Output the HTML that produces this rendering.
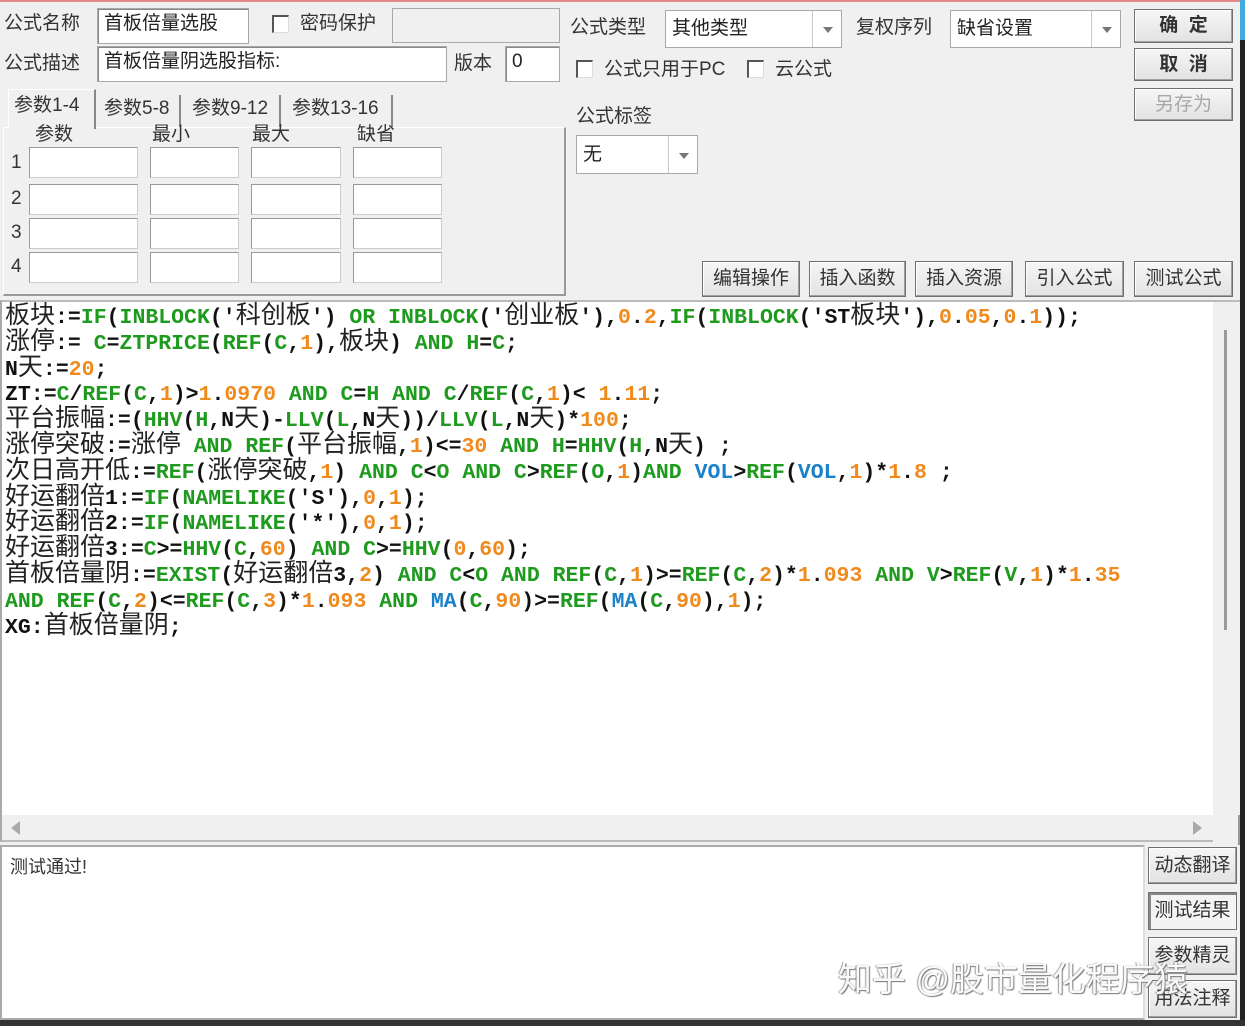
<!DOCTYPE html>
<html><head><meta charset="utf-8"><style>
*{margin:0;padding:0;box-sizing:border-box}
body{width:1245px;height:1026px;background:#f0f0f0;position:relative;overflow:hidden;font-family:"Liberation Sans","Noto Sans CJK SC",sans-serif;font-size:18px;color:#222}
.a{position:absolute}
.lbl{position:absolute;font-size:19px;line-height:24px;color:#333;white-space:nowrap}
.inp{position:absolute;background:#fff;border:1px solid #a8a8a8;box-shadow:inset 1px 1px 0 #888;font-size:19px;line-height:30px;padding-left:6px;white-space:nowrap}
.cb{position:absolute;width:17px;height:18px;background:#fff;border:1px solid #888;border-right-color:#ddd;border-bottom-color:#ddd;border-top:2px solid #555;border-left:2px solid #555}
.btn{position:absolute;background:linear-gradient(#f6f6f6,#e2e2e2);border:1px solid #707070;box-shadow:inset -1px -1px 0 #a0a0a0,inset 1px 1px 0 #fff;font-size:19px;text-align:center;color:#333;white-space:nowrap}
.combo{position:absolute;background:#fff;border:1px solid #a8a8a8;font-size:19px;padding-left:6px;white-space:nowrap}
.combo .dd{position:absolute;right:0;top:0;bottom:0;width:29px;border-left:1px solid #c8c8c8}
.combo .dd:after{content:"";position:absolute;left:10px;top:50%;margin-top:-2px;border-left:5px solid transparent;border-right:5px solid transparent;border-top:6px solid #777}
.cell{position:absolute;background:#fff;border:1px solid #999;border-bottom-color:#ccc;border-right-color:#ccc}
#code{position:absolute;left:0;top:300px;width:1213px;height:515px;background:#fff;border-top:2px solid #bbb;border-left:2px solid #aaa;padding-top:4px;padding-left:3px}
.ln{height:25.8px;line-height:25.8px;white-space:pre;font-family:"Liberation Mono",monospace;font-weight:bold;font-size:21.5px;color:#111;overflow:visible}
.ln i{font-style:normal;font-weight:normal;font-family:"Noto Sans CJK SC",sans-serif;font-size:25px;line-height:0;color:#222;letter-spacing:0px}
.g{color:#1e9a1e}.o{color:#f08a1c}.b{color:#1a82c8}
</style></head><body>
<div class="a" style="left:0;top:0;width:1245px;height:2px;background:#e28a8a"></div>
<div class="a" style="left:1240px;top:0;width:5px;height:1026px;background:#222"></div>
<div class="a" style="left:1240px;top:0;width:5px;height:40px;background:#4ad"></div>

<div class="lbl" style="left:4px;top:12px">公式名称</div>
<div class="inp" style="left:97px;top:8px;width:152px;height:36px">首板倍量选股</div>
<div class="cb" style="left:272px;top:15px"></div>
<div class="lbl" style="left:300px;top:12px">密码保护</div>
<div class="a" style="left:392px;top:8px;width:168px;height:35px;border:1px solid #a8a8a8;background:#f0f0f0"></div>
<div class="lbl" style="left:4px;top:52px">公式描述</div>
<div class="inp" style="left:97px;top:46px;width:350px;height:36px">首板倍量阴选股指标:</div>
<div class="lbl" style="left:454px;top:52px">版本</div>
<div class="inp" style="left:505px;top:46px;width:55px;height:36px">0</div>

<div class="a" style="left:3px;top:127px;width:563px;height:169px;border:1px solid #fff;border-right:2px solid #999;border-bottom:2px solid #999"></div>
<div class="a" style="left:8px;top:89px;width:88px;height:40px;background:#f0f0f0;border-top:1px solid #fff;border-left:1px solid #fff;border-right:2px solid #888"></div>
<div class="lbl" style="left:14px;top:94px">参数1-4</div>
<div class="a" style="left:97px;top:95px;width:84px;height:32px;border-right:2px solid #888"></div>
<div class="lbl" style="left:104px;top:97px">参数5-8</div>
<div class="a" style="left:183px;top:95px;width:98px;height:32px;border-right:2px solid #888"></div>
<div class="lbl" style="left:192px;top:97px">参数9-12</div>
<div class="a" style="left:283px;top:95px;width:110px;height:32px;border-right:2px solid #888"></div>
<div class="lbl" style="left:292px;top:97px">参数13-16</div>
<div class="lbl" style="left:35px;top:123px">参数</div>
<div class="lbl" style="left:152px;top:123px">最小</div>
<div class="lbl" style="left:252px;top:123px">最大</div>
<div class="lbl" style="left:357px;top:123px">缺省</div>
<div class="lbl" style="left:11px;top:151px">1</div>
<div class="lbl" style="left:11px;top:187px">2</div>
<div class="lbl" style="left:11px;top:221px">3</div>
<div class="lbl" style="left:11px;top:255px">4</div>
<div class="cell" style="left:29px;top:147px;width:109px;height:31px"></div><div class="cell" style="left:150px;top:147px;width:89px;height:31px"></div><div class="cell" style="left:251px;top:147px;width:90px;height:31px"></div><div class="cell" style="left:353px;top:147px;width:89px;height:31px"></div>
<div class="cell" style="left:29px;top:184px;width:109px;height:31px"></div><div class="cell" style="left:150px;top:184px;width:89px;height:31px"></div><div class="cell" style="left:251px;top:184px;width:90px;height:31px"></div><div class="cell" style="left:353px;top:184px;width:89px;height:31px"></div>
<div class="cell" style="left:29px;top:218px;width:109px;height:31px"></div><div class="cell" style="left:150px;top:218px;width:89px;height:31px"></div><div class="cell" style="left:251px;top:218px;width:90px;height:31px"></div><div class="cell" style="left:353px;top:218px;width:89px;height:31px"></div>
<div class="cell" style="left:29px;top:252px;width:109px;height:31px"></div><div class="cell" style="left:150px;top:252px;width:89px;height:31px"></div><div class="cell" style="left:251px;top:252px;width:90px;height:31px"></div><div class="cell" style="left:353px;top:252px;width:89px;height:31px"></div>

<div class="lbl" style="left:570px;top:16px">公式类型</div>
<div class="combo" style="left:665px;top:10px;width:177px;height:38px;line-height:36px">其他类型<div class="dd"></div></div>
<div class="lbl" style="left:856px;top:16px">复权序列</div>
<div class="combo" style="left:950px;top:10px;width:171px;height:38px;line-height:36px">缺省设置<div class="dd"></div></div>
<div class="btn" style="left:1134px;top:9px;width:99px;height:34px;line-height:32px;font-weight:bold">确&nbsp;&nbsp;定</div>
<div class="btn" style="left:1134px;top:48px;width:99px;height:33px;line-height:31px;font-weight:bold">取&nbsp;&nbsp;消</div>
<div class="btn" style="left:1134px;top:88px;width:99px;height:33px;line-height:31px;color:#a8a8a8">另存为</div>
<div class="cb" style="left:576px;top:60px"></div>
<div class="lbl" style="left:604px;top:58px">公式只用于PC</div>
<div class="cb" style="left:747px;top:60px"></div>
<div class="lbl" style="left:775px;top:58px">云公式</div>
<div class="lbl" style="left:576px;top:105px">公式标签</div>
<div class="combo" style="left:576px;top:135px;width:122px;height:39px;line-height:37px">无<div class="dd"></div></div>
<div class="btn" style="left:702px;top:261px;width:98px;height:36px;line-height:34px">编辑操作</div>
<div class="btn" style="left:809px;top:261px;width:97px;height:36px;line-height:34px">插入函数</div>
<div class="btn" style="left:915px;top:261px;width:98px;height:36px;line-height:34px">插入资源</div>
<div class="btn" style="left:1025px;top:261px;width:99px;height:36px;line-height:34px">引入公式</div>
<div class="btn" style="left:1134px;top:261px;width:99px;height:36px;line-height:34px">测试公式</div>

<div id="code">
<div class="ln"><i>板块</i>:=<span class="g">IF</span>(<span class="g">INBLOCK</span>('<i>科创板</i>') <span class="g">OR INBLOCK</span>('<i>创业板</i>'),<span class="o">0</span>.<span class="o">2</span>,<span class="g">IF</span>(<span class="g">INBLOCK</span>('ST<i>板块</i>'),<span class="o">0</span>.<span class="o">05</span>,<span class="o">0</span>.<span class="o">1</span>));</div>
<div class="ln"><i>涨停</i>:= <span class="g">C</span>=<span class="g">ZTPRICE</span>(<span class="g">REF</span>(<span class="g">C</span>,<span class="o">1</span>),<i>板块</i>) <span class="g">AND H</span>=<span class="g">C</span>;</div>
<div class="ln">N<i>天</i>:=<span class="o">20</span>;</div>
<div class="ln">ZT:=<span class="g">C</span>/<span class="g">REF</span>(<span class="g">C</span>,<span class="o">1</span>)&gt;<span class="o">1</span>.<span class="o">0970</span> <span class="g">AND C</span>=<span class="g">H AND C</span>/<span class="g">REF</span>(<span class="g">C</span>,<span class="o">1</span>)&lt; <span class="o">1</span>.<span class="o">11</span>;</div>
<div class="ln"><i>平台振幅</i>:=(<span class="g">HHV</span>(<span class="g">H</span>,N<i>天</i>)-<span class="g">LLV</span>(<span class="g">L</span>,N<i>天</i>))/<span class="g">LLV</span>(<span class="g">L</span>,N<i>天</i>)*<span class="o">100</span>;</div>
<div class="ln"><i>涨停突破</i>:=<i>涨停</i> <span class="g">AND REF</span>(<i>平台振幅</i>,<span class="o">1</span>)&lt;=<span class="o">30</span> <span class="g">AND H</span>=<span class="g">HHV</span>(<span class="g">H</span>,N<i>天</i>) ;</div>
<div class="ln"><i>次日高开低</i>:=<span class="g">REF</span>(<i>涨停突破</i>,<span class="o">1</span>) <span class="g">AND C</span>&lt;<span class="g">O AND C</span>&gt;<span class="g">REF</span>(<span class="g">O</span>,<span class="o">1</span>)<span class="g">AND</span> <span class="b">VOL</span>&gt;<span class="g">REF</span>(<span class="b">VOL</span>,<span class="o">1</span>)*<span class="o">1</span>.<span class="o">8</span> ;</div>
<div class="ln"><i>好运翻倍</i>1:=<span class="g">IF</span>(<span class="g">NAMELIKE</span>('S'),<span class="o">0</span>,<span class="o">1</span>);</div>
<div class="ln"><i>好运翻倍</i>2:=<span class="g">IF</span>(<span class="g">NAMELIKE</span>('*'),<span class="o">0</span>,<span class="o">1</span>);</div>
<div class="ln"><i>好运翻倍</i>3:=<span class="g">C</span>&gt;=<span class="g">HHV</span>(<span class="g">C</span>,<span class="o">60</span>) <span class="g">AND C</span>&gt;=<span class="g">HHV</span>(<span class="o">0</span>,<span class="o">60</span>);</div>
<div class="ln"><i>首板倍量阴</i>:=<span class="g">EXIST</span>(<i>好运翻倍</i>3,<span class="o">2</span>) <span class="g">AND C</span>&lt;<span class="g">O AND REF</span>(<span class="g">C</span>,<span class="o">1</span>)&gt;=<span class="g">REF</span>(<span class="g">C</span>,<span class="o">2</span>)*<span class="o">1</span>.<span class="o">093</span> <span class="g">AND V</span>&gt;<span class="g">REF</span>(<span class="g">V</span>,<span class="o">1</span>)*<span class="o">1</span>.<span class="o">35</span></div>
<div class="ln"><span class="g">AND REF</span>(<span class="g">C</span>,<span class="o">2</span>)&lt;=<span class="g">REF</span>(<span class="g">C</span>,<span class="o">3</span>)*<span class="o">1</span>.<span class="o">093</span> <span class="g">AND</span> <span class="b">MA</span>(<span class="g">C</span>,<span class="o">90</span>)&gt;=<span class="g">REF</span>(<span class="b">MA</span>(<span class="g">C</span>,<span class="o">90</span>),<span class="o">1</span>);</div>
<div class="ln">XG:<i>首板倍量阴</i>;</div>
</div>
<div class="a" style="left:1213px;top:300px;width:27px;height:515px;background:#f0f0f0;border-top:2px solid #bbb"></div>
<div class="a" style="left:1224px;top:330px;width:3px;height:300px;background:#9a9a9a"></div>
<div class="a" style="left:0;top:815px;width:1213px;height:27px;background:#f0f0f0;border-left:2px solid #aaa;border-bottom:2px solid #bbb"></div>
<div class="a" style="left:11px;top:821px;border-top:7px solid transparent;border-bottom:7px solid transparent;border-right:9px solid #aaa"></div>
<div class="a" style="left:1193px;top:821px;border-top:7px solid transparent;border-bottom:7px solid transparent;border-left:9px solid #aaa"></div>
<div class="a" style="left:1213px;top:815px;width:27px;height:30px;background:#f0f0f0;border-right:2px solid #999"></div>

<div class="a" style="left:0;top:845px;width:1145px;height:175px;background:#fff;border:2px solid #aaa;border-right-color:#ddd"></div>
<div class="a" style="left:10px;top:853px;font-size:18px;color:#333">测试通过!</div>
<div class="btn" style="left:1148px;top:847px;width:89px;height:37px;line-height:35px">动态翻译</div>
<div class="btn" style="left:1148px;top:892px;width:89px;height:38px;line-height:36px;background:#f4f4f4;box-shadow:inset 2px 2px 0 #888">测试结果</div>
<div class="btn" style="left:1148px;top:937px;width:89px;height:38px;line-height:36px">参数精灵</div>
<div class="btn" style="left:1148px;top:980px;width:89px;height:38px;line-height:36px">用法注释</div>
<div class="a" style="left:838px;top:952px;font-size:34px;color:#fafafa;text-shadow:1px 1px 1px #777,-1px 0 1px #999;white-space:nowrap">知乎 @股市量化程序猿</div>
<div class="a" style="left:0;top:1020px;width:1245px;height:6px;background:#333"></div>
</body></html>
